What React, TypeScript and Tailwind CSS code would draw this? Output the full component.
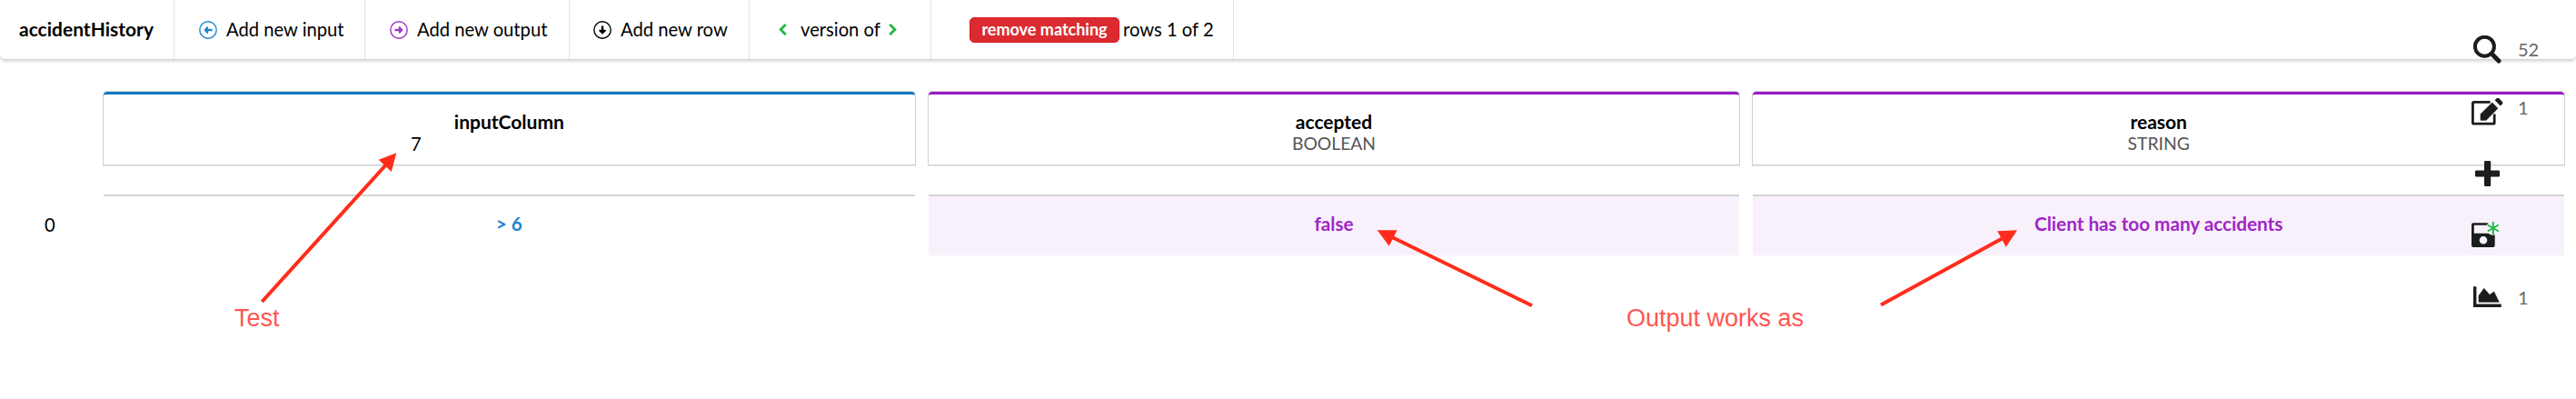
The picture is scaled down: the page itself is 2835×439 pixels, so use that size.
import React from "react";

function CircleArrow({ className }: { className: string }) {
  return (
    <svg viewBox="0 0 20 20" className={"size-5 shrink-0 " + className} fill="none" stroke="currentColor">
      <circle cx="10" cy="10" r="9.2" strokeWidth="1.4" />
      <path d="M14.6 10H8" strokeWidth="2.4" />
      <path d="M9.4 6.9 6.3 10l3.1 3.1Z" strokeWidth="1.5" strokeLinejoin="round" fill="currentColor" />
    </svg>
  );
}

function Chevron({ className }: { className: string }) {
  return (
    <svg viewBox="0 0 9 13" className={"h-[13px] w-[9px] shrink-0 text-[#21ba45] " + className} fill="none" stroke="currentColor">
      <path d="M6.9 1.8 2.2 6.5l4.7 4.7" strokeWidth="2.9" strokeLinecap="round" />
    </svg>
  );
}

function SearchIcon() {
  return (
    <svg viewBox="0 0 31 31" className="h-[31px] w-[31px]" fill="none" stroke="currentColor">
      <circle cx="12.4" cy="12.2" r="10.5" strokeWidth="4" />
      <path d="M22 22 28 28" strokeWidth="5" strokeLinecap="round" />
      <path d="M18.5 18.5 22 22" strokeWidth="3.4" />
    </svg>
  );
}

function EditIcon() {
  return (
    <svg viewBox="0 0 35 31" className="h-[31px] w-[35px]" fill="currentColor">
      <path d="M20.6 5.4H2.6Q1.4 5.4 1.4 6.6V28q0 1.2 1.2 1.2H24q1.2 0 1.2-1.2V18.5" fill="none" stroke="currentColor" strokeWidth="2.8" />
      <path d="M10 25.3V18.6L22.7 5.9 29 12.2 16.2 25.3Z" stroke="currentColor" strokeWidth="0.6" strokeLinejoin="round" />
      <path d="M25.6 3.3 27.6 1.3q1.4-1.3 2.8 0l3.4 3.4q1.3 1.4 0 2.8L31.8 9.4Z" />
    </svg>
  );
}

function PlusIcon() {
  return (
    <svg viewBox="0 0 28 28" className="h-7 w-7" fill="currentColor">
      <rect x="0" y="10.4" width="27" height="7" rx="1.2" />
      <rect x="10" y="0" width="7.2" height="28" rx="1.2" />
    </svg>
  );
}

function SaveNewIcon() {
  return (
    <svg viewBox="0 0 32 30" className="h-[30px] w-8">
      <path
        d="M2 2.3H24L25.7 4V27q0 2-2 2H2q-2 0-2-2V4.3q0-2 2-2ZM2.8 4.8V13.7H22V4.8ZM13 17a4.3 4.3 0 1 0 0 8.6 4.3 4.3 0 1 0 0-8.6Z"
        fill="#1b1c1d"
        fillRule="evenodd"
      />
      <circle cx="23.8" cy="8" r="7.8" fill="#f8f0fb" />
      <path d="M23.8 .9V15.1M17.7 4.5 29.9 11.5M29.9 4.5 17.7 11.5" stroke="#21ba45" strokeWidth="2" />
    </svg>
  );
}

function ChartIcon() {
  return (
    <svg viewBox="0 0 31 23" className="h-[23px] w-[31px]" fill="currentColor">
      <path d="M0 .3H3.4V19.6H30.7V23H0Z" />
      <path d="M6 10.3 11.8 2.3 18 9.4 22.7 5.9 28.3 17.3H6Z" stroke="currentColor" strokeWidth="0.6" strokeLinejoin="round" />
    </svg>
  );
}

function Toolbar() {
  return (
    <header className="flex h-[66px] rounded-b-md border-b border-[#d4d4d5] bg-white shadow-[0_2px_3px_0_rgba(34,36,38,0.15)]">
      <div className="flex w-[192px] items-center border-r border-[#e4e4e5] pb-[2px] pl-[21px] text-[21px] font-bold">accidentHistory</div>
      <div className="flex w-[210px] items-center gap-[10px] border-r border-[#e4e4e5] pl-[27px]">
        <CircleArrow className="text-[#2185d0]" />
        <span>Add new input</span>
      </div>
      <div className="flex w-[225px] items-center gap-[10px] border-r border-[#e4e4e5] pl-[27px]">
        <CircleArrow className="rotate-180 text-[#a333c8]" />
        <span>Add new output</span>
      </div>
      <div className="flex w-[198px] items-center gap-[10px] border-r border-[#e4e4e5] pl-[26px]">
        <CircleArrow className="-rotate-90" />
        <span>Add new row</span>
      </div>
      <div className="flex w-[200px] items-center border-r border-[#e4e4e5] pl-[32px]">
        <Chevron className="mr-[15px]" />
        <span className="w-[97px]">version of</span>
        <Chevron className="rotate-180" />
      </div>
      <div className="flex w-[333px] items-center border-r border-[#e4e4e5] pl-[42px]">
        <span className="mr-1 flex h-7 w-[165px] items-center justify-center rounded-[5px] border border-[#db1b25] bg-[#db2b30] text-[18px] font-bold text-white">
          remove matching
        </span>
        <span>rows 1 of 2</span>
      </div>
    </header>
  );
}

function HeadCell({ name, type, tone }: { name: string; type?: string; tone: string }) {
  return (
    <div className={"h-[80px] flex-1 rounded-t-[4px] border-t-[3px] pt-[18px] text-center leading-6 shadow-[0_0_0_1px_#d0d0d1,0_1px_0_1px_#e8e8e9] " + tone}>
      <div className="text-[21px] font-bold">{name}</div>
      {type ? (
        <div className="text-[19.3px] text-[#555]">{type}</div>
      ) : (
        <div className="pl-[338px] text-left">7</div>
      )}
    </div>
  );
}

function Annotations() {
  return (
    <>
      <svg className="pointer-events-none absolute inset-0 h-[439px] w-[2835px]" viewBox="0 0 2835 439" fill="#ff2c1c" stroke="#ff2c1c">
        <path d="M288.3 332 426 180M1686 336.3 1530 260M2070 335.5 2206 261" strokeWidth="4" fill="none" />
        <path d="M436.3 168.3 430.7 189 416.7 175.7ZM1515.7 253.2 1537.6 253.3 1528.7 270.7ZM2220 253.3 2207.7 271.7 2198.2 254.3Z" stroke="none" />
      </svg>
      <span className="absolute left-[258px] top-[335px] font-['Liberation_Sans',sans-serif] text-[27px] leading-[31px] text-[#ff5650]">Test</span>
      <span className="absolute left-[1790px] top-[335px] font-['Liberation_Sans',sans-serif] text-[27px] leading-[31px] text-[#ff5650]">Output works as</span>
    </>
  );
}

function SideTools() {
  return (
    <aside className="absolute left-[2720px] top-[39px] flex w-[90px] flex-col text-[20px] leading-6 text-[#1b1c1d]">
      <div className="flex h-[68px] items-start pl-[2px]">
        <SearchIcon />
        <span className="ml-[18px] mt-[3px] text-[#666]">52</span>
      </div>
      <div className="flex h-[70px] items-start">
        <EditIcon />
        <span className="-mt-[1px] ml-[16px] text-[#666]">1</span>
      </div>
      <div className="flex h-[66px] items-start pl-[4px]">
        <PlusIcon />
      </div>
      <div className="flex h-[72px] items-start">
        <SaveNewIcon />
      </div>
      <div className="flex items-start pl-[2px]">
        <ChartIcon />
        <span className="ml-[18px] text-[#666]">1</span>
      </div>
    </aside>
  );
}

export default function App() {
  return (
    <div className="relative h-[439px] w-[2835px] overflow-hidden bg-white font-['Lato',sans-serif] text-[20.2px] text-black">
      <Toolbar />
      <main className="pl-[114px] pr-[13px] pt-[35px]">
        <div className="flex gap-[15px]">
          <HeadCell name="inputColumn" tone="border-[#1678c2]" />
          <HeadCell name="accepted" type="BOOLEAN" tone="border-[#9a1bc4]" />
          <HeadCell name="reason" type="STRING" tone="border-[#9a1bc4]" />
        </div>
        <div className="-ml-[114px] mt-[33px] flex h-[67px] text-center font-bold">
          <div className="flex w-[114px] items-center pl-[49px] font-normal">0</div>
          <div className="flex flex-1 gap-[15px] text-[20.7px] leading-[61px]">
            <div className="flex-1 border-t-2 border-[#d4d4d5] text-[#2185d0]">&gt; 6</div>
            <div className="flex-1 border-t-2 border-[#d4d4d5] bg-[#f8f0fb] text-[#a025c6]">false</div>
            <div className="flex-1 border-t-2 border-[#d4d4d5] bg-[#f8f0fb] text-[#a025c6]">Client has too many accidents</div>
          </div>
        </div>
      </main>
      <Annotations />
      <SideTools />
    </div>
  );
}
